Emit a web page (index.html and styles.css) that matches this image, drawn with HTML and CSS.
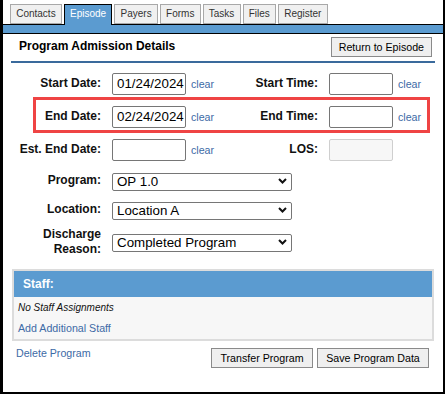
FILE: index.html
```html
<!DOCTYPE html>
<html>
<head>
<meta charset="utf-8">
<link rel="stylesheet" href="styles.css">
</head>
<body>
  <div class="tabbar">
    <div class="tab">Contacts</div>
    <div class="tab active">Episode</div>
    <div class="tab">Payers</div>
    <div class="tab">Forms</div>
    <div class="tab">Tasks</div>
    <div class="tab">Files</div>
    <div class="tab">Register</div>
  </div>
  <div class="band"></div>
  <div class="content">
    <div class="head">
      <div class="title">Program Admission Details</div>
      <button class="btn">Return to Episode</button>
    </div>
    <div class="form">
      <div class="row">
        <label class="lbl">Start Date:</label>
        <div class="field"><input class="inp date" value="01/24/2024"><a class="link">clear</a></div>
        <label class="lbl">Start Time:</label>
        <div class="field"><input class="inp time" value=""><a class="link">clear</a></div>
      </div>
      <div class="row highlight">
        <label class="lbl">End Date:</label>
        <div class="field"><input class="inp date" value="02/24/2024"><a class="link">clear</a></div>
        <label class="lbl">End Time:</label>
        <div class="field"><input class="inp time" value=""><a class="link">clear</a></div>
      </div>
      <div class="row">
        <label class="lbl">Est. End Date:</label>
        <div class="field"><input class="inp date" value=""><a class="link">clear</a></div>
        <label class="lbl">LOS:</label>
        <div class="field"><input class="inp time dis" value="" disabled></div>
      </div>
      <div class="srow">
        <label class="lbl">Program:</label>
        <div class="sel"><select><option>OP 1.0</option></select><svg class="chev" width="9" height="6" viewBox="0 0 9 6"><polyline points="1,1 4.5,4.5 8,1" fill="none" stroke="#111" stroke-width="2"/></svg></div>
      </div>
      <div class="srow">
        <label class="lbl">Location:</label>
        <div class="sel"><select><option>Location A</option></select><svg class="chev" width="9" height="6" viewBox="0 0 9 6"><polyline points="1,1 4.5,4.5 8,1" fill="none" stroke="#111" stroke-width="2"/></svg></div>
      </div>
      <div class="srow tall">
        <label class="lbl two">Discharge<br>Reason:</label>
        <div class="sel"><select><option>Completed Program</option></select><svg class="chev" width="9" height="6" viewBox="0 0 9 6"><polyline points="1,1 4.5,4.5 8,1" fill="none" stroke="#111" stroke-width="2"/></svg></div>
      </div>
    </div>
    <div class="panel">
      <div class="panel-head">Staff:</div>
      <div class="panel-body">
        <div class="none">No Staff Assignments</div>
        <a class="link add">Add Additional Staff</a>
      </div>
    </div>
    <div class="footer">
      <a class="link del">Delete Program</a>
      <div class="btns">
        <button class="btn transfer">Transfer Program</button>
        <button class="btn save">Save Program Data</button>
      </div>
    </div>
  </div>
</body>
</html>
```
FILE: styles.css
```css
html, body {
  margin: 0;
  padding: 0;
}
body {
  width: 445px;
  height: 394px;
  box-sizing: border-box;
  border-left: 3px solid #000;
  border-right: 2px solid #000;
  border-bottom: 2px solid #000;
  background: #fff;
  font-family: "Liberation Sans", Arial, sans-serif;
  color: #000;
  overflow: hidden;
}
.tabbar {
  display: flex;
  align-items: flex-end;
  gap: 2px;
  padding: 4px 0 0 7px;
  height: 20px;
  border-bottom: 1px solid #000;
}
.tab {
  height: 20px;
  box-sizing: border-box;
  padding: 0 5.2px;
  border: 1px solid #a8a8a8;
  background: #f0f0f0;
  color: #333;
  font-size: 10px;
  line-height: 18px;
}
.tab.active {
  height: 21px;
  margin-bottom: -1px;
  background: #5b9bd0;
  border-color: #000;
  border-bottom: none;
  color: #fff;
}
.band {
  height: 8px;
  background: #5b9bd0;
  border-bottom: 1px solid #000;
}
.content {
  margin: 0 8px;
}
.head {
  display: flex;
  justify-content: space-between;
  align-items: flex-start;
  padding: 3px 3px 4px 8px;
  border-bottom: 2px solid #3a6a9c;
}
.title {
  font-size: 12px;
  font-weight: bold;
  line-height: 14px;
  margin-top: 2px;
}
.btn {
  height: 20px;
  padding: 0 7px;
  margin: 0;
  border: 1px solid #8a8a8a;
  border-radius: 0;
  background: #efefef;
  font-family: "Liberation Sans", Arial, sans-serif;
  font-size: 10.67px;
  color: #000;
}
.form {
  margin-top: 4px;
}
.row {
  position: relative;
  display: grid;
  grid-template-columns: 90px 105px 90px 1fr;
  column-gap: 11px;
  align-items: center;
  height: 33px;
}
.highlight::after {
  content: "";
  position: absolute;
  left: 22px;
  right: 5px;
  top: -3px;
  bottom: 0;
  border: 3px solid #ef4444;
}
.lbl {
  text-align: right;
  font-size: 12px;
  font-weight: bold;
  line-height: 15px;
  color: #111;
}
.field {
  display: flex;
  align-items: center;
  gap: 5px;
}
.inp {
  height: 22px;
  box-sizing: border-box;
  margin: 0;
  padding: 0 0 0 4px;
  border: 1px solid #767676;
  border-radius: 2px;
  font-family: "Liberation Sans", Arial, sans-serif;
  font-size: 13.33px;
  color: #000;
  background: #fff;
}
.date { width: 74px; }
.time { width: 64px; }
.dis {
  background: #f7f7f7;
  border-color: #cfcfcf;
}
.link {
  color: #3d6aa6;
  font-size: 10.67px;
  cursor: pointer;
}
.srow {
  display: grid;
  grid-template-columns: 90px auto;
  column-gap: 11px;
  align-items: center;
  height: 29px;
}
.srow.tall {
  height: 36px;
}
.sel {
  position: relative;
  width: 180px;
  height: 18px;
}
.sel select {
  appearance: none;
  -webkit-appearance: none;
  width: 180px;
  height: 18px;
  box-sizing: border-box;
  margin: 0;
  padding: 0 0 0 4px;
  border: 1px solid #767676;
  border-radius: 2px;
  background: #fff;
  font-family: "Liberation Sans", Arial, sans-serif;
  font-size: 13.33px;
  line-height: 16px;
  color: #000;
}
.chev {
  position: absolute;
  right: 5px;
  top: 6px;
  pointer-events: none;
}
.panel {
  margin: 9px 1px 0 1px;
  border: 2px solid #dcdcdc;
  background: #f7f7f7;
}
.panel-head {
  height: 26px;
  background: #5b9bd0;
  color: #fff;
  font-size: 12px;
  font-weight: bold;
  line-height: 26px;
  padding-left: 9px;
}
.panel-body {
  padding: 3px 4px 3px 4px;
}
.none {
  font-size: 10px;
  font-style: italic;
  line-height: 15px;
  color: #111;
}
.add {
  display: block;
  margin-top: 6px;
  line-height: 15px;
}
.footer {
  display: flex;
  justify-content: space-between;
  align-items: flex-start;
  padding: 5px 6px 0 5px;
}
.del {
  line-height: 14px;
}
.btns {
  display: flex;
  gap: 4px;
  margin-top: 2px;
}
.transfer { width: 102px; }
.save { width: 112px; }
```
